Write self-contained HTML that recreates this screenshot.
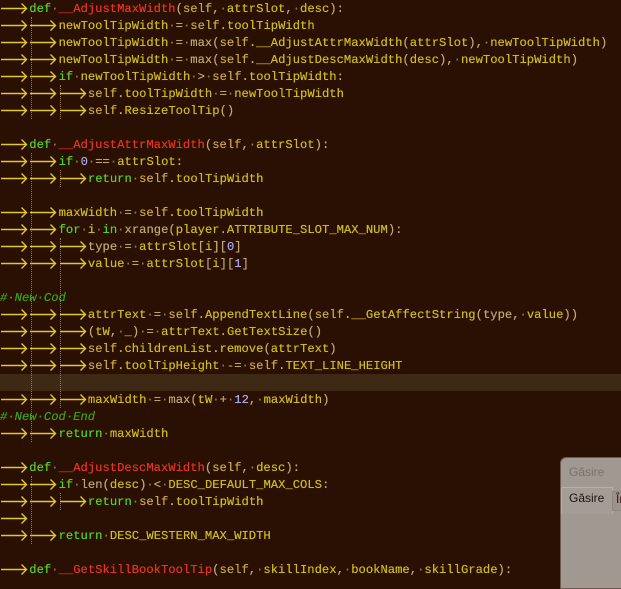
<!DOCTYPE html>
<html><head><meta charset="utf-8"><style>
html,body{margin:0;padding:0;}
body{width:621px;height:569px;overflow:hidden;background:#2a1002;position:relative;font-family:"Liberation Mono",monospace;font-size:12.2px;}
.l{position:absolute;left:0;height:17px;line-height:18px;white-space:pre;color:#d0bc1c;text-shadow:0 0 0.4px currentColor;}
.t{display:inline-block;width:29.3px;height:17px;vertical-align:top;position:relative;}
.t svg{position:absolute;left:0;top:0;}
.k{color:#58d02c}.f{color:#e83420}.s{color:#c8a848}.n{color:#b0a8f0}.d{color:#8c7a52}.p{color:#c0a874}.c{color:#3fa01c;font-style:italic}
.g{position:absolute;width:0;border-left:1px dotted #9a7e38;}
.hl{position:absolute;left:0;top:374px;width:621px;height:17px;background:#3e2a14;}
.dlg{position:absolute;left:560px;top:457px;width:80px;height:130px;background:#a19891;border-radius:6px 0 0 0;border:1px solid #6a5a50;}
</style></head><body>
<div class="hl"></div>
<div class="g" style="left:31px;top:17px;height:102px"></div>
<div class="g" style="left:60px;top:85px;height:34px"></div>
<div class="g" style="left:31px;top:153px;height:289px"></div>
<div class="g" style="left:60px;top:170px;height:17px"></div>
<div class="g" style="left:60px;top:238px;height:170px"></div>
<div class="g" style="left:31px;top:476px;height:68px"></div>
<div class="g" style="left:60px;top:493px;height:17px"></div>
<svg width="0" height="0" style="position:absolute"><defs><symbol id="a" viewBox="0 0 29 17"><path d="M1 8.5H26.5M21.5 3.5L26.5 8.5L21.5 13.5" stroke="#e0c834" stroke-width="1.4" fill="none"/></symbol></defs></svg>
<div class="l" style="top:0"><span class="t"><svg width="29" height="17"><use href="#a"/></svg></span><span class="k">def</span><span class="d">·</span><span class="f">__AdjustMaxWidth</span><span class="p">(</span><span class="s">self</span><span class="p">,</span><span class="d">·</span>attrSlot<span class="p">,</span><span class="d">·</span>desc<span class="p">):</span></div>
<div class="l" style="top:17px"><span class="t"><svg width="29" height="17"><use href="#a"/></svg></span><span class="t"><svg width="29" height="17"><use href="#a"/></svg></span>newToolTipWidth<span class="d">·</span><span class="p">=</span><span class="d">·</span><span class="s">self</span>.toolTipWidth</div>
<div class="l" style="top:34px"><span class="t"><svg width="29" height="17"><use href="#a"/></svg></span><span class="t"><svg width="29" height="17"><use href="#a"/></svg></span>newToolTipWidth<span class="d">·</span><span class="p">=</span><span class="d">·</span><span class="p">max(</span><span class="s">self</span>.__AdjustAttrMaxWidth<span class="p">(</span>attrSlot<span class="p">),</span><span class="d">·</span>newToolTipWidth<span class="p">)</span></div>
<div class="l" style="top:51px"><span class="t"><svg width="29" height="17"><use href="#a"/></svg></span><span class="t"><svg width="29" height="17"><use href="#a"/></svg></span>newToolTipWidth<span class="d">·</span><span class="p">=</span><span class="d">·</span><span class="p">max(</span><span class="s">self</span>.__AdjustDescMaxWidth<span class="p">(</span>desc<span class="p">),</span><span class="d">·</span>newToolTipWidth<span class="p">)</span></div>
<div class="l" style="top:68px"><span class="t"><svg width="29" height="17"><use href="#a"/></svg></span><span class="t"><svg width="29" height="17"><use href="#a"/></svg></span><span class="k">if</span><span class="d">·</span>newToolTipWidth<span class="d">·</span><span class="p">&gt;</span><span class="d">·</span><span class="s">self</span>.toolTipWidth<span class="p">:</span></div>
<div class="l" style="top:85px"><span class="t"><svg width="29" height="17"><use href="#a"/></svg></span><span class="t"><svg width="29" height="17"><use href="#a"/></svg></span><span class="t"><svg width="29" height="17"><use href="#a"/></svg></span><span class="s">self</span>.toolTipWidth<span class="d">·</span><span class="p">=</span><span class="d">·</span>newToolTipWidth</div>
<div class="l" style="top:102px"><span class="t"><svg width="29" height="17"><use href="#a"/></svg></span><span class="t"><svg width="29" height="17"><use href="#a"/></svg></span><span class="t"><svg width="29" height="17"><use href="#a"/></svg></span><span class="s">self</span>.ResizeToolTip<span class="p">()</span></div>
<div class="l" style="top:136px"><span class="t"><svg width="29" height="17"><use href="#a"/></svg></span><span class="k">def</span><span class="d">·</span><span class="f">__AdjustAttrMaxWidth</span><span class="p">(</span><span class="s">self</span><span class="p">,</span><span class="d">·</span>attrSlot<span class="p">):</span></div>
<div class="l" style="top:153px"><span class="t"><svg width="29" height="17"><use href="#a"/></svg></span><span class="t"><svg width="29" height="17"><use href="#a"/></svg></span><span class="k">if</span><span class="d">·</span><span class="n">0</span><span class="d">·</span><span class="p">==</span><span class="d">·</span>attrSlot<span class="p">:</span></div>
<div class="l" style="top:170px"><span class="t"><svg width="29" height="17"><use href="#a"/></svg></span><span class="t"><svg width="29" height="17"><use href="#a"/></svg></span><span class="t"><svg width="29" height="17"><use href="#a"/></svg></span><span class="k">return</span><span class="d">·</span><span class="s">self</span>.toolTipWidth</div>
<div class="l" style="top:204px"><span class="t"><svg width="29" height="17"><use href="#a"/></svg></span><span class="t"><svg width="29" height="17"><use href="#a"/></svg></span>maxWidth<span class="d">·</span><span class="p">=</span><span class="d">·</span><span class="s">self</span>.toolTipWidth</div>
<div class="l" style="top:221px"><span class="t"><svg width="29" height="17"><use href="#a"/></svg></span><span class="t"><svg width="29" height="17"><use href="#a"/></svg></span><span class="k">for</span><span class="d">·</span>i<span class="d">·</span><span class="k">in</span><span class="d">·</span><span class="p">xrange(</span>player.ATTRIBUTE_SLOT_MAX_NUM<span class="p">):</span></div>
<div class="l" style="top:238px"><span class="t"><svg width="29" height="17"><use href="#a"/></svg></span><span class="t"><svg width="29" height="17"><use href="#a"/></svg></span><span class="t"><svg width="29" height="17"><use href="#a"/></svg></span><span class="p">type</span><span class="d">·</span><span class="p">=</span><span class="d">·</span>attrSlot<span class="p">[</span>i<span class="p">][</span><span class="n">0</span><span class="p">]</span></div>
<div class="l" style="top:255px"><span class="t"><svg width="29" height="17"><use href="#a"/></svg></span><span class="t"><svg width="29" height="17"><use href="#a"/></svg></span><span class="t"><svg width="29" height="17"><use href="#a"/></svg></span>value<span class="d">·</span><span class="p">=</span><span class="d">·</span>attrSlot<span class="p">[</span>i<span class="p">][</span><span class="n">1</span><span class="p">]</span></div>
<div class="l c" style="top:289px">#·New·Cod</div>
<div class="l" style="top:306px"><span class="t"><svg width="29" height="17"><use href="#a"/></svg></span><span class="t"><svg width="29" height="17"><use href="#a"/></svg></span><span class="t"><svg width="29" height="17"><use href="#a"/></svg></span>attrText<span class="d">·</span><span class="p">=</span><span class="d">·</span><span class="s">self</span>.AppendTextLine<span class="p">(</span><span class="s">self</span>.__GetAffectString<span class="p">(type,</span><span class="d">·</span>value<span class="p">))</span></div>
<div class="l" style="top:323px"><span class="t"><svg width="29" height="17"><use href="#a"/></svg></span><span class="t"><svg width="29" height="17"><use href="#a"/></svg></span><span class="t"><svg width="29" height="17"><use href="#a"/></svg></span><span class="p">(</span>tW<span class="p">,</span><span class="d">·</span>_<span class="p">)</span><span class="d">·</span><span class="p">=</span><span class="d">·</span>attrText.GetTextSize<span class="p">()</span></div>
<div class="l" style="top:340px"><span class="t"><svg width="29" height="17"><use href="#a"/></svg></span><span class="t"><svg width="29" height="17"><use href="#a"/></svg></span><span class="t"><svg width="29" height="17"><use href="#a"/></svg></span><span class="s">self</span>.childrenList.remove<span class="p">(</span>attrText<span class="p">)</span></div>
<div class="l" style="top:357px"><span class="t"><svg width="29" height="17"><use href="#a"/></svg></span><span class="t"><svg width="29" height="17"><use href="#a"/></svg></span><span class="t"><svg width="29" height="17"><use href="#a"/></svg></span><span class="s">self</span>.toolTipHeight<span class="d">·</span><span class="p">-=</span><span class="d">·</span><span class="s">self</span>.TEXT_LINE_HEIGHT</div>
<div class="l" style="top:391px"><span class="t"><svg width="29" height="17"><use href="#a"/></svg></span><span class="t"><svg width="29" height="17"><use href="#a"/></svg></span><span class="t"><svg width="29" height="17"><use href="#a"/></svg></span>maxWidth<span class="d">·</span><span class="p">=</span><span class="d">·</span><span class="p">max(</span>tW<span class="d">·</span><span class="p">+</span><span class="d">·</span><span class="n">12</span><span class="p">,</span><span class="d">·</span>maxWidth<span class="p">)</span></div>
<div class="l c" style="top:408px">#·New·Cod·End</div>
<div class="l" style="top:425px"><span class="t"><svg width="29" height="17"><use href="#a"/></svg></span><span class="t"><svg width="29" height="17"><use href="#a"/></svg></span><span class="k">return</span><span class="d">·</span>maxWidth</div>
<div class="l" style="top:459px"><span class="t"><svg width="29" height="17"><use href="#a"/></svg></span><span class="k">def</span><span class="d">·</span><span class="f">__AdjustDescMaxWidth</span><span class="p">(</span><span class="s">self</span><span class="p">,</span><span class="d">·</span>desc<span class="p">):</span></div>
<div class="l" style="top:476px"><span class="t"><svg width="29" height="17"><use href="#a"/></svg></span><span class="t"><svg width="29" height="17"><use href="#a"/></svg></span><span class="k">if</span><span class="d">·</span><span class="p">len(</span>desc<span class="p">)</span><span class="d">·</span><span class="p">&lt;</span><span class="d">·</span>DESC_DEFAULT_MAX_COLS<span class="p">:</span></div>
<div class="l" style="top:493px"><span class="t"><svg width="29" height="17"><use href="#a"/></svg></span><span class="t"><svg width="29" height="17"><use href="#a"/></svg></span><span class="t"><svg width="29" height="17"><use href="#a"/></svg></span><span class="k">return</span><span class="d">·</span><span class="s">self</span>.toolTipWidth</div>
<div class="l" style="top:510px"><span class="t"><svg width="29" height="17"><use href="#a"/></svg></span></div>
<div class="l" style="top:527px"><span class="t"><svg width="29" height="17"><use href="#a"/></svg></span><span class="t"><svg width="29" height="17"><use href="#a"/></svg></span><span class="k">return</span><span class="d">·</span>DESC_WESTERN_MAX_WIDTH</div>
<div class="l" style="top:561px"><span class="t"><svg width="29" height="17"><use href="#a"/></svg></span><span class="k">def</span><span class="d">·</span><span class="f">__GetSkillBookToolTip</span><span class="p">(</span><span class="s">self</span><span class="p">,</span><span class="d">·</span>skillIndex<span class="p">,</span><span class="d">·</span>bookName<span class="p">,</span><span class="d">·</span>skillGrade<span class="p">):</span></div>
<div class="dlg">
<div style="position:absolute;left:8px;top:7px;font-family:'Liberation Sans',sans-serif;font-size:12px;color:#7a726c">Găsire</div>
<div style="position:absolute;left:0;top:29px;width:50px;height:26px;border:1px solid #b8b0a8;border-bottom:none;background:#a59c95"></div>
<div style="position:absolute;left:8px;top:33px;font-family:'Liberation Sans',sans-serif;font-size:12px;color:#1a1410">Găsire</div>
<div style="position:absolute;left:51px;top:33px;width:30px;height:18px;border:1px solid #8e8680;background:#9c938c;font-family:'Liberation Sans',sans-serif;font-size:12px;color:#3a1010;padding-left:3px">În</div>
</div>
</body></html>
